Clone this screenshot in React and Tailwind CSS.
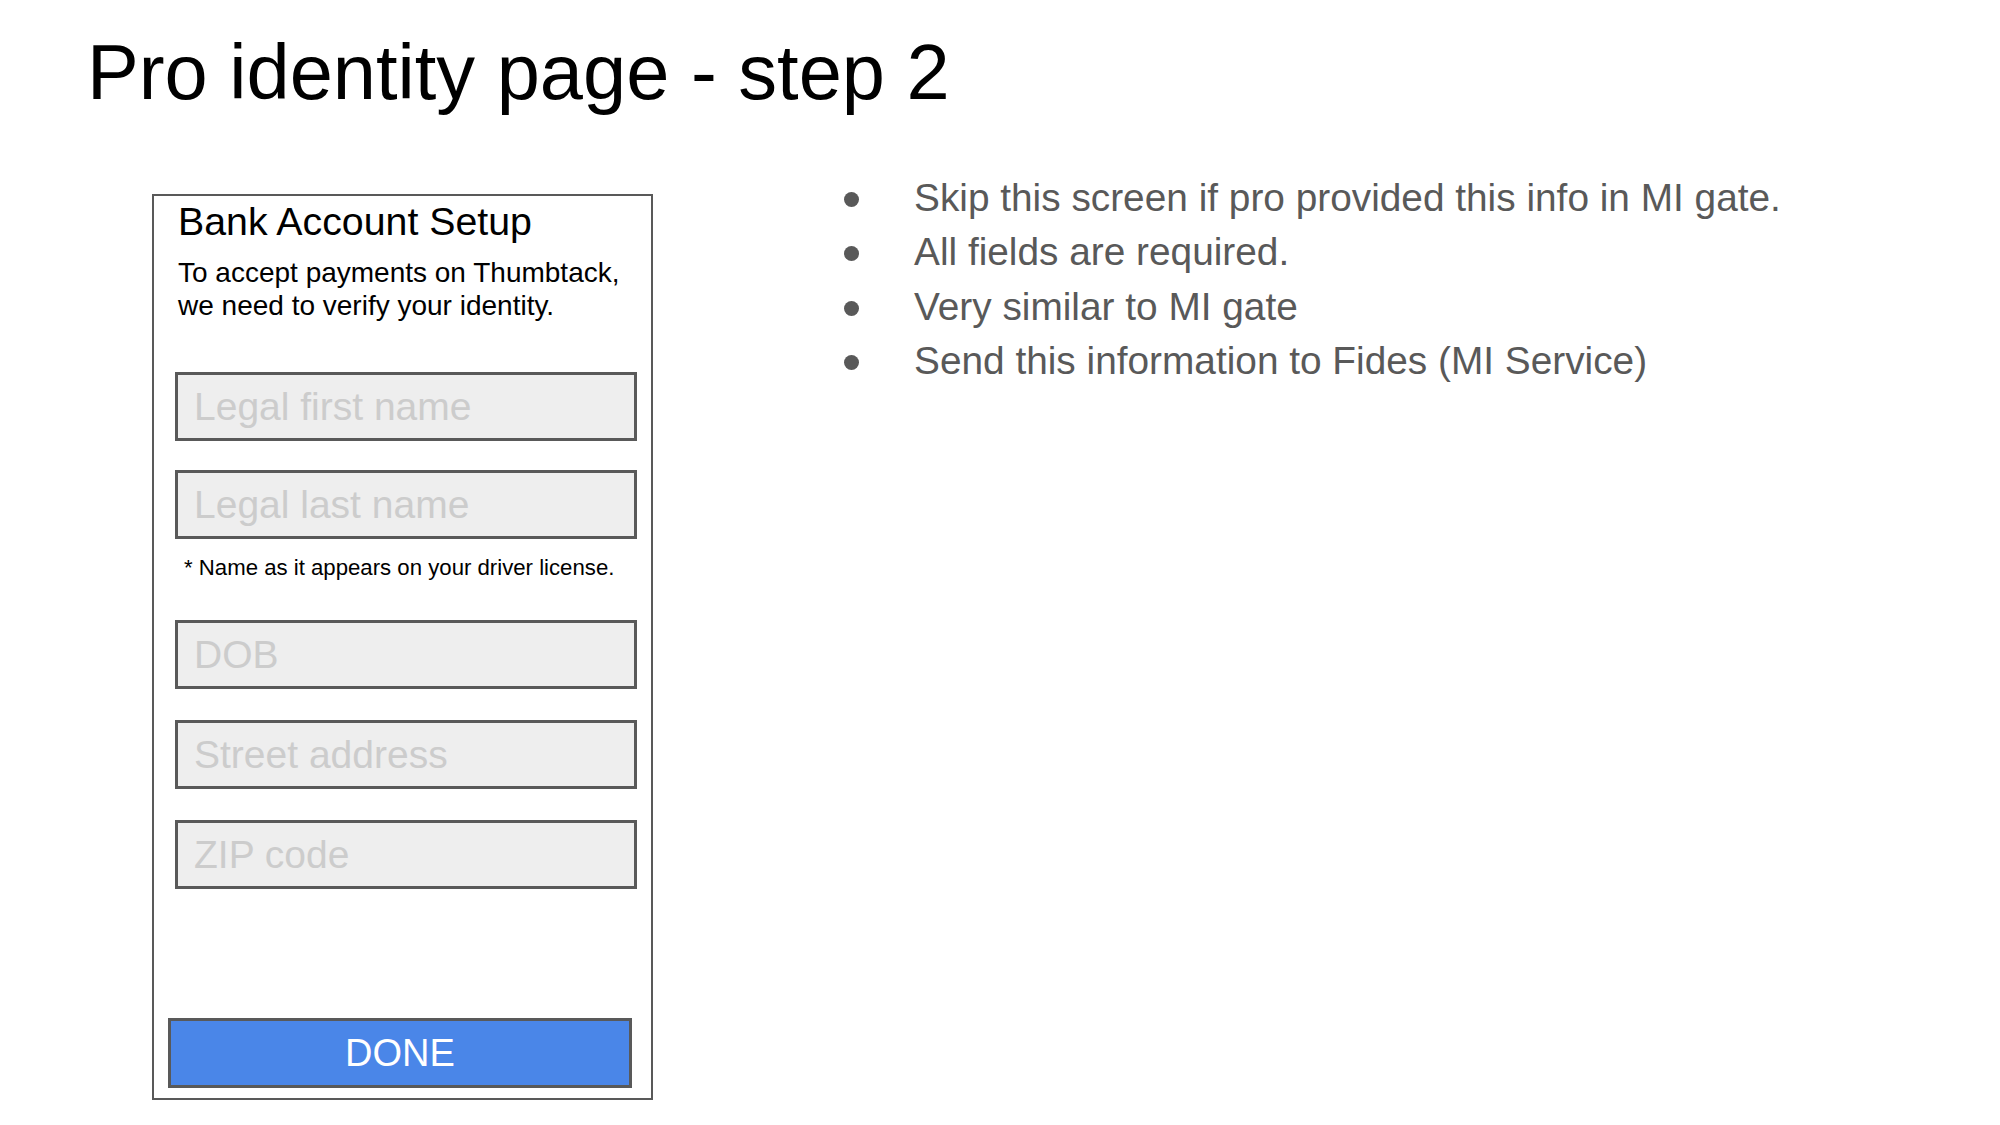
import React from 'react';

// Slide: bank account setup mock on the left, notes on the right.

const FIELDS_NAME = ['Legal first name', 'Legal last name'];
const FIELDS_REST = ['DOB', 'Street address', 'ZIP code'];

const NOTES = [
  'Skip this screen if pro provided this info in MI gate.',
  'All fields are required.',
  'Very similar to MI gate',
  'Send this information to Fides (MI Service)',
];

function Field({ label, className = '' }) {
  return (
    <div
      className={`w-[462px] h-[69px] ml-[21px] flex items-center pl-[16px] border-[3px] border-[#595959] bg-[#eeeeee] text-[39px] leading-none text-[#cccccc] ${className}`}
    >
      {label}
    </div>
  );
}

function SetupCard() {
  return (
    <div className="ml-[152px] mt-[21px] w-[501px] border-2 border-[#595959] bg-white pb-[10px]">
      <h2 className="pl-[24px] pt-[3px] text-[39.3px] leading-[44px] text-black">Bank Account Setup</h2>
      <p className="pl-[24px] mt-[13px] text-[28px] leading-[33px] text-black">
        To accept payments on Thumbtack,
        <br />
        we need to verify your identity.
      </p>

      <Field label={FIELDS_NAME[0]} className="mt-[50px]" />
      <Field label={FIELDS_NAME[1]} className="mt-[29px]" />
      <p className="pl-[30px] mt-[16px] text-[22.2px] leading-[26px] text-black">
        * Name as it appears on your driver license.
      </p>

      <Field label={FIELDS_REST[0]} className="mt-[39px]" />
      <Field label={FIELDS_REST[1]} className="mt-[31px]" />
      <Field label={FIELDS_REST[2]} className="mt-[31px]" />

      <button
        type="button"
        className="ml-[14px] mt-[129px] w-[464px] h-[70px] flex items-center justify-center border-[3px] border-[#595959] bg-[#4a86e8] text-[38px] leading-none text-white"
      >
        DONE
      </button>
    </div>
  );
}

export default function App() {
  return (
    <div className="w-[2000px] h-[1125px] bg-white overflow-hidden font-['Liberation_Sans',Arial,sans-serif]">
      <h1 className="pl-[87px] pt-[34px] text-[77.6px] leading-none text-black">
        Pro identity page - step 2
      </h1>

      <div className="mt-[61px] flex items-start">
        <SetupCard />

        <ul className="ml-[191px] -mt-[2px]">
          {NOTES.map((note) => (
            <li key={note} className="flex items-center h-[54.5px] text-[38.8px] leading-[54.5px] text-[#595959]">
              <span className="w-[15px] h-[15px] mt-[3px] rounded-full bg-[#595959] shrink-0" />
              <span className="ml-[55px]">{note}</span>
            </li>
          ))}
        </ul>
      </div>
    </div>
  );
}
